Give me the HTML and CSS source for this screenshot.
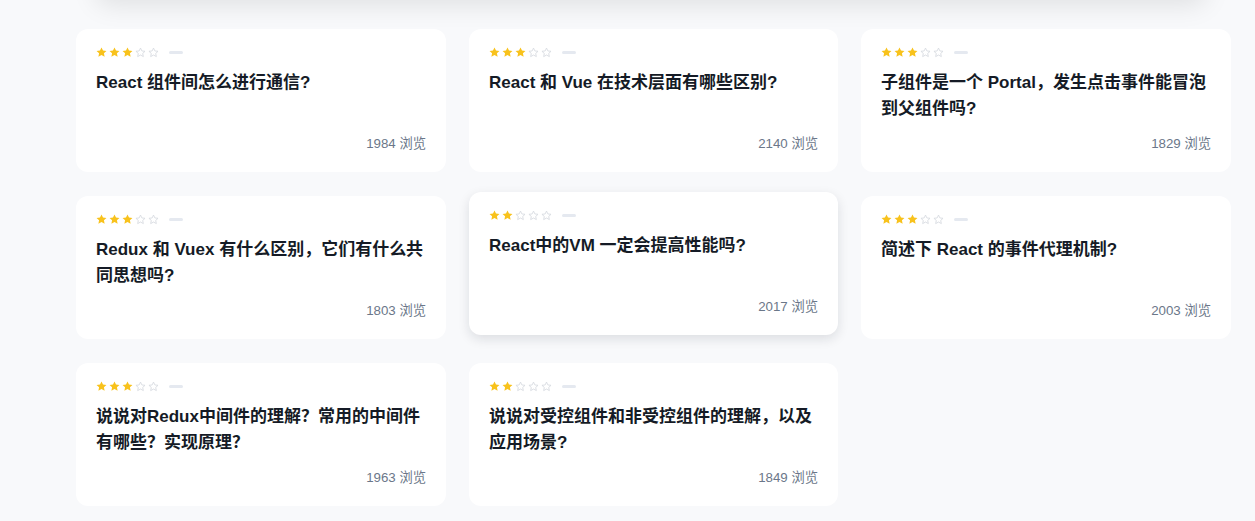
FILE: index.html
```html
<!DOCTYPE html>
<html lang="zh-CN">
<head>
<meta charset="utf-8">
<title>面试题</title>
<link rel="stylesheet" href="styles.css">
</head>
<body>
<div class="page">
  <div class="top-panel"></div>
  <div class="grid">
    <div class="card">
      <div class="meta"><span class="stars s3"><i></i><i></i><i></i><i></i><i></i></span><span class="bar"></span></div>
      <div class="title">React 组件间怎么进行通信?</div>
      <div class="views">1984 浏览</div>
    </div>
    <div class="card">
      <div class="meta"><span class="stars s3"><i></i><i></i><i></i><i></i><i></i></span><span class="bar"></span></div>
      <div class="title">React 和 Vue 在技术层面有哪些区别?</div>
      <div class="views">2140 浏览</div>
    </div>
    <div class="card">
      <div class="meta"><span class="stars s3"><i></i><i></i><i></i><i></i><i></i></span><span class="bar"></span></div>
      <div class="title">子组件是一个 Portal，发生点击事件能冒泡到父组件吗?</div>
      <div class="views">1829 浏览</div>
    </div>
    <div class="card">
      <div class="meta"><span class="stars s3"><i></i><i></i><i></i><i></i><i></i></span><span class="bar"></span></div>
      <div class="title">Redux 和 Vuex 有什么区别，它们有什么共同思想吗?</div>
      <div class="views">1803 浏览</div>
    </div>
    <div class="card is-hover">
      <div class="meta"><span class="stars s2"><i></i><i></i><i></i><i></i><i></i></span><span class="bar"></span></div>
      <div class="title">React中的VM 一定会提高性能吗?</div>
      <div class="views">2017 浏览</div>
    </div>
    <div class="card">
      <div class="meta"><span class="stars s3"><i></i><i></i><i></i><i></i><i></i></span><span class="bar"></span></div>
      <div class="title">简述下 React 的事件代理机制?</div>
      <div class="views">2003 浏览</div>
    </div>
    <div class="card">
      <div class="meta"><span class="stars s3"><i></i><i></i><i></i><i></i><i></i></span><span class="bar"></span></div>
      <div class="title">说说对Redux中间件的理解？常用的中间件有哪些？实现原理？</div>
      <div class="views">1963 浏览</div>
    </div>
    <div class="card">
      <div class="meta"><span class="stars s2"><i></i><i></i><i></i><i></i><i></i></span><span class="bar"></span></div>
      <div class="title">说说对受控组件和非受控组件的理解，以及应用场景?</div>
      <div class="views">1849 浏览</div>
    </div>
  </div>
</div>
</body>
</html>
```

FILE: styles.css
```css
* { box-sizing: border-box; }
html, body { margin: 0; padding: 0; }
body {
  background: #f8f9fb;
  font-family: "Liberation Sans", "Noto Sans CJK SC", sans-serif;
  height: 521px;
  overflow: hidden;
}
.page {
  padding: 0 24px 0 76px;
}
.top-panel {
  height: 200px;
  margin: -203px 40px 0 20px;
  width: 1110px;
  background: #fff;
  border-radius: 12px;
  box-shadow: 0 8px 26px rgba(0, 0, 0, 0.1);
}
.grid {
  margin-top: 32px;
  width: 1156px;
  display: grid;
  grid-template-columns: 370px 369px 370px;
  column-gap: 23px;
  row-gap: 24px;
}
.card {
  background: #fff;
  border-radius: 12px;
  padding: 18px 20px 18px 20px;
  display: flex;
  flex-direction: column;
  height: 143px;
}
.card.is-hover {
  transform: translateY(-4px);
  box-shadow: 0 4px 12px rgba(15, 23, 42, 0.12);
}
.meta {
  display: flex;
  align-items: center;
  height: 11px;
}
.stars {
  display: flex;
  gap: 2px;
}
.stars i {
  display: block;
  width: 11px;
  height: 11px;
  background: url("data:image/svg+xml,%3Csvg xmlns='http://www.w3.org/2000/svg' viewBox='0 0 24 24'%3E%3Cpath d='M12 2.3l3 6.3 6.9.8-5.1 4.7 1.4 6.8L12 17.5l-6.2 3.4 1.4-6.8-5.1-4.7 6.9-.8z' fill='none' stroke='%23d4d8de' stroke-width='1.8' stroke-linejoin='round'/%3E%3C/svg%3E") center/contain no-repeat;
}
.stars.s3 i:nth-child(-n+3),
.stars.s2 i:nth-child(-n+2) {
  background-image: url("data:image/svg+xml,%3Csvg xmlns='http://www.w3.org/2000/svg' viewBox='0 0 24 24'%3E%3Cpath d='M12 1l3.3 6.8 7.5.9-5.5 5.1 1.5 7.4L12 17.5l-6.8 3.7 1.5-7.4-5.5-5.1 7.5-.9z' fill='%23f8c21c'/%3E%3C/svg%3E");
}
.bar {
  display: block;
  width: 14px;
  height: 3px;
  border-radius: 2px;
  background: #e5e9f0;
  margin-left: 10px;
}
.title {
  margin-top: 12px;
  font-size: 17px;
  font-weight: 700;
  line-height: 26px;
  color: #151b26;
  min-height: 52px;
}
.views {
  margin-top: auto;
  text-align: right;
  font-size: 13.3px;
  line-height: 20px;
  color: #6b7789;
}
```
